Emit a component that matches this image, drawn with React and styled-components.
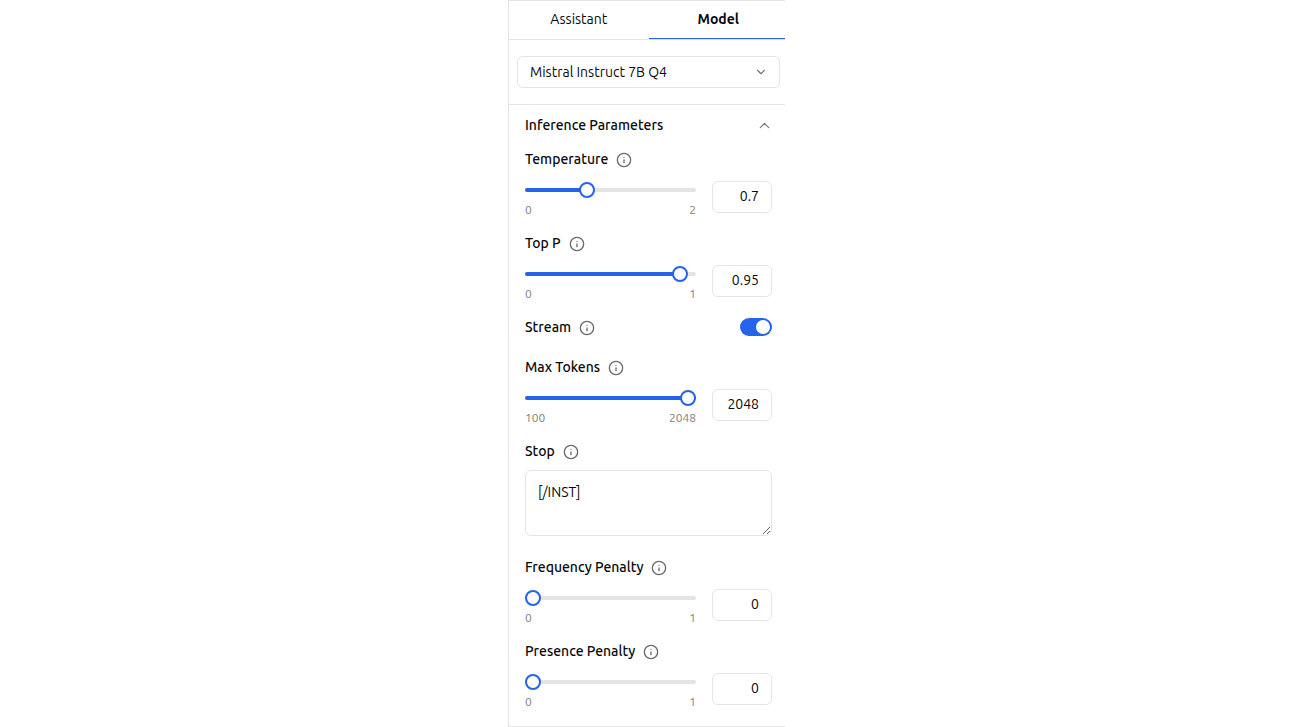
import React, { useState } from 'react'
import styled, { createGlobalStyle } from 'styled-components'
import { ChevronDown, ChevronUp, Info } from 'lucide-react'

const GlobalStyle = createGlobalStyle`
  * {
    box-sizing: border-box;
  }
  body {
    margin: 0;
    background: #fff;
    color: #09090b;
    font-family: Ubuntu, 'Open Sans', sans-serif;
    font-size: 14px;
    line-height: 20px;
  }
  button, input, select, textarea {
    font: inherit;
    color: inherit;
    margin: 0;
  }
`
const Page = styled.main`
  display: flex;
  justify-content: center;
  min-height: 100vh;
  padding-left: 1px;
`
const Panel = styled.aside`
  width: 277px;
  border: 1px solid #e4e4e4;
  border-right: 0;
  overflow: hidden;
`
const PanelBody = styled.div`
  width: 279px;
`
const Tabs = styled.div`
  display: grid;
  grid-template-columns: 1fr 1fr;
  height: 39px;
  border-bottom: 1px solid #e4e4e4;
`
const Tab = styled.button`
  background: none;
  border: 0;
  border-bottom: 1px solid ${props => props.$active ? '#2563eb' : 'transparent'};
  padding: 0 0 2px;
  font-weight: ${props => props.$active ? 700 : 400};
`
const ModelPicker = styled.div`
  display: grid;
  align-items: center;
  padding: 16px 8px;
  border-bottom: 1px solid #e4e4e4;
  > * {
    grid-area: 1 / 1;
  }
  svg {
    justify-self: end;
    margin-right: 12px;
    color: #737373;
    pointer-events: none;
  }
`
const Select = styled.select`
  appearance: none;
  width: 100%;
  height: 32px;
  padding: 0 32px 0 12px;
  border: 1px solid #e4e4e4;
  border-radius: 6px;
  background: #fff;
`
const SectionToggle = styled.button`
  display: flex;
  align-items: center;
  justify-content: space-between;
  width: 100%;
  height: 40px;
  padding: 0 15px 0 16px;
  border: 0;
  background: none;
  font-weight: 500;
  svg {
    color: #737373;
  }
`
const Params = styled.div`
  padding: 4px 16px 0;
`
const Param = styled.div`
  margin-bottom: 20px;
`
const ParamHeader = styled.div`
  display: flex;
  align-items: center;
  gap: 8px;
  height: 20px;
  font-weight: 500;
  svg {
    margin-top: 2px;
    color: #6b6b6b;
  }
  input {
    margin-left: auto;
  }
`
const SliderRow = styled.div`
  display: flex;
  gap: 16px;
  height: 32px;
  margin-top: 12px;
`
const SliderColumn = styled.div`
  flex: 1;
  padding-top: 1px;
`
const Slider = styled.input`
  appearance: none;
  display: block;
  width: 100%;
  height: 16px;
  background: transparent;
  &::-webkit-slider-runnable-track {
    height: 4px;
    border-radius: 4px;
    background: linear-gradient(to right, #2563eb var(--fill), #e4e4e4 var(--fill));
  }
  &::-webkit-slider-thumb {
    appearance: none;
    width: 16px;
    height: 16px;
    margin-top: -6px;
    border: 2px solid #2563eb;
    border-radius: 50%;
    background: #fff;
  }
`
const Limits = styled.div`
  display: flex;
  justify-content: space-between;
  margin-top: 4px;
  color: #808080;
  font-size: 12px;
  line-height: 16px;
`
const NumberBox = styled.input`
  width: 60px;
  height: 32px;
  padding: 0 12px 2px;
  border: 1px solid #e4e4e4;
  border-radius: 6px;
  background: #fff;
  text-align: right;
`
const Switch = styled.input`
  appearance: none;
  display: flex;
  align-items: center;
  width: 32px;
  height: 18px;
  padding: 0 2px;
  border-radius: 9px;
  background: #d4d4d4;
  &::before {
    content: '';
    width: 14px;
    height: 14px;
    border-radius: 50%;
    background: #fff;
  }
  &:checked {
    background: #2563eb;
    justify-content: flex-end;
  }
`
const TextArea = styled.textarea`
  display: block;
  width: 100%;
  height: 66px;
  margin: 9px 0 21px;
  padding: 11px 12px;
  border: 1px solid #e4e4e4;
  border-radius: 6px;
  background: #fff;
  resize: vertical;
`

function SliderParam({ id, label, min, max, step, initial }) {
  const [value, setValue] = useState(initial)
  const fill = ((value - min) / (max - min)) * 100
  const handleChange = (event) => setValue(event.target.value)

  return (
    <Param>
      <ParamHeader>
        <label htmlFor={id}>{label}</label>
        <Info size={16} />
      </ParamHeader>
      <SliderRow>
        <SliderColumn>
          <Slider
            id={id}
            type='range'
            min={min}
            max={max}
            step={step}
            value={value}
            onChange={handleChange}
            style={{ '--fill': `${fill}%` }}
          />
          <Limits>
            <span>{min}</span>
            <span>{max}</span>
          </Limits>
        </SliderColumn>
        <NumberBox
          inputMode='decimal'
          aria-label={`${label} value`}
          value={value}
          onChange={handleChange}
        />
      </SliderRow>
    </Param>
  )
}

export default function App() {
  const [tab, setTab] = useState('Model')
  const [open, setOpen] = useState(true)
  const [stream, setStream] = useState(true)

  return (
    <Page>
      <GlobalStyle />
      <Panel>
        <PanelBody>
          <Tabs>
            {['Assistant', 'Model'].map(name => (
              <Tab key={name} $active={tab === name} onClick={() => setTab(name)}>{name}</Tab>
            ))}
          </Tabs>
          <ModelPicker>
            <Select aria-label='Model'>
              <option>Mistral Instruct 7B Q4</option>
            </Select>
            <ChevronDown size={14} />
          </ModelPicker>
          <SectionToggle aria-expanded={open} onClick={() => setOpen(!open)}>
            Inference Parameters
            <ChevronUp size={17} strokeWidth={1.5} />
          </SectionToggle>
          {open && (
            <Params>
              <SliderParam id='temperature' label='Temperature' min={0} max={2} step={0.1} initial={0.7} />
              <SliderParam id='top-p' label='Top P' min={0} max={1} step={0.01} initial={0.95} />
              <Param>
                <ParamHeader>
                  <label htmlFor='stream'>Stream</label>
                  <Info size={16} />
                  <Switch
                    id='stream'
                    type='checkbox'
                    role='switch'
                    checked={stream}
                    onChange={() => setStream(!stream)}
                  />
                </ParamHeader>
              </Param>
              <SliderParam id='max-tokens' label='Max Tokens' min={100} max={2048} step={1} initial={2048} />
              <Param>
                <ParamHeader>
                  <label htmlFor='stop'>Stop</label>
                  <Info size={16} />
                </ParamHeader>
                <TextArea id='stop' defaultValue='[/INST]' />
              </Param>
              <SliderParam id='frequency-penalty' label='Frequency Penalty' min={0} max={1} step={0.01} initial={0} />
              <SliderParam id='presence-penalty' label='Presence Penalty' min={0} max={1} step={0.01} initial={0} />
            </Params>
          )}
        </PanelBody>
      </Panel>
    </Page>
  )
}
